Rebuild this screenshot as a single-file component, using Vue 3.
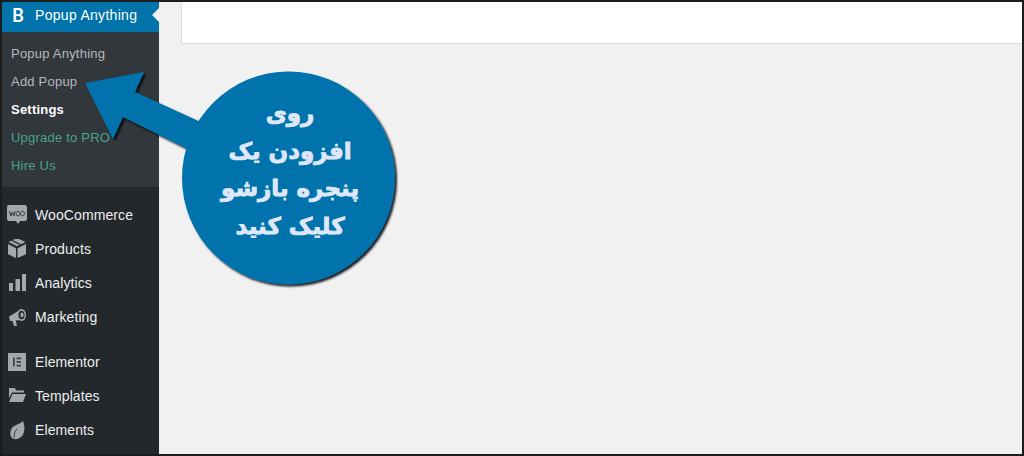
<script setup>
const subItems = [
  { label: 'Popup Anything', kind: 'plain' },
  { label: 'Add Popup', kind: 'plain' },
  { label: 'Settings', kind: 'current' },
  { label: 'Upgrade to PRO', kind: 'green' },
  { label: 'Hire Us', kind: 'green' },
]
const groupOne = [
  { label: 'WooCommerce', icon: 'woo' },
  { label: 'Products', icon: 'box' },
  { label: 'Analytics', icon: 'bars' },
  { label: 'Marketing', icon: 'horn' },
]
const groupTwo = [
  { label: 'Elementor', icon: 'elementor' },
  { label: 'Templates', icon: 'folder' },
  { label: 'Elements', icon: 'leaf' },
]
const groups = [groupOne, groupTwo]
const lines = ['روی', 'افزودن یک', 'پنجره بازشو', 'کلیک کنید']
</script>

<template>
  <div class="frame">
    <aside class="sidebar">
      <div class="active-head">
        <span class="logo">B</span>
        <span class="active-title">Popup Anything</span>
        <span class="notch"></span>
      </div>
      <ul class="submenu">
        <li v-for="item in subItems" :key="item.label" :class="item.kind">{{ item.label }}</li>
      </ul>
      <ul v-for="(group, g) in groups" :key="g" class="menu">
        <li v-for="item in group" :key="item.label" class="menu-item">
          <span class="icon">
            <svg v-if="item.icon === 'woo'" width="20" height="20" viewBox="0 0 20 20">
              <path fill="#a4a8ab" d="M2 0h16a2 2 0 0 1 2 2v12a2 2 0 0 1-2 2h-5l-2 3-2-3H2a2 2 0 0 1-2-2V2a2 2 0 0 1 2-2z"/>
              <path fill="none" stroke="#33383c" stroke-width="1" d="M2.500 6l1.300 5 1.500-4 1.500 4L8 6M11 6.300a1.900 2.300 0 1 0 .01 0M15.500 6.300a1.900 2.300 0 1 0 .01 0"/>
            </svg>
            <svg v-else-if="item.icon === 'box'" width="20" height="20" viewBox="0 0 20 20">
              <path fill="#a4a8ab" d="M10 -1l8.500 4-8.500 4.300L1.500 3zM1 5l8 4.200V19l-8-3.800zM19 5v10.200L10.500 19V9.200z"/>
              <path fill="#23282d" d="M5.500 1l8.500 4.200-1.400.7L4.100 1.700z"/>
            </svg>
            <svg v-else-if="item.icon === 'bars'" width="20" height="20" viewBox="0 0 20 20">
              <path fill="#a4a8ab" d="M2 10h4v8H2zM8.500 6H13v12H8.500zM15 1h4v17h-4z"/>
            </svg>
            <svg v-else-if="item.icon === 'horn'" width="20" height="20" viewBox="0 0 20 20">
              <path fill="#a4a8ab" d="M2 9.500L13 3v10l-4.300.4 1.300 5.600H7L5.300 13.800 3 14z"/>
              <ellipse cx="14.500" cy="8" rx="4.500" ry="6" fill="#a4a8ab"/>
              <ellipse cx="14.500" cy="8" rx="3" ry="4.300" fill="#23282d"/>
              <ellipse cx="15" cy="8" rx="1.600" ry="2.400" fill="#a4a8ab"/>
            </svg>
            <svg v-else-if="item.icon === 'elementor'" width="20" height="20" viewBox="0 0 20 20">
              <path fill="#a4a8ab" d="M1 1h18v18H1z"/>
              <path fill="#3b4045" d="M6 5.500h1.700v9H6zM9.500 5.500h4.500v1.700H9.500zM9.500 9.100h4.500v1.700H9.500zM9.500 12.800h4.500v1.700H9.500z"/>
            </svg>
            <svg v-else-if="item.icon === 'folder'" width="20" height="20" viewBox="0 0 20 20">
              <path fill="#a4a8ab" d="M2 2h5.500l2 2.500H17V6.500H5L2 12z"/>
              <path fill="#a4a8ab" d="M5.500 8H19l-3 8H2z"/>
            </svg>
            <svg v-else width="20" height="20" viewBox="0 0 20 20">
              <path fill="#a4a8ab" d="M16 1c2 5 2 11-.5 14.500C13 19 8 20 5.500 18.500 2.500 16 3 11 5 8c2-3 7-3.500 11-7z"/>
              <path fill="none" stroke="#23282d" stroke-width=".8" d="M7 18c0-4 1-7 3-9"/>
            </svg>
          </span>
          <span class="label">{{ item.label }}</span>
        </li>
      </ul>
    </aside>
    <main class="content">
      <div class="panel"></div>
    </main>

    <svg class="arrow" width="1024" height="456" viewBox="0 0 1024 456">
      <defs>
        <filter id="hard-shadow" x="-20%" y="-20%" width="140%" height="140%">
          <feDropShadow dx="2" dy="2" stdDeviation="1" flood-color="#000" flood-opacity="0.9"/>
        </filter>
      </defs>
      <g filter="url(#hard-shadow)" fill="#0172ac">
        <path d="M85 83L144 72L135 92L205 124L190 150L123 117L113 139Z"/>
        <circle cx="288.500" cy="178" r="106.500"/>
      </g>
    </svg>
    <div class="bubble-text" dir="rtl">
      <div v-for="line in lines" :key="line">{{ line }}</div>
    </div>
  </div>
</template>

<style>
html, body { margin: 0; padding: 0; }
</style>

<style scoped>
.frame {
  position: relative;
  width: 1024px;
  height: 456px;
  box-sizing: border-box;
  border: 2px solid #1d1d1d;
  background: #f1f1f1;
  display: flex;
  overflow: hidden;
  font-family: "Liberation Sans", Arial, sans-serif;
}
.sidebar {
  width: 157px;
  flex: none;
  background: #23282d;
  color: #eee;
}
ul { list-style: none; margin: 0; padding: 0; }
.active-head {
  position: relative;
  height: 30px;
  padding-bottom: 4px;
  box-sizing: border-box;
  background: #0073aa;
  color: #fff;
  display: flex;
  align-items: center;
  font-size: 14px;
  letter-spacing: .3px;
}
.logo {
  width: 33px;
  padding-left: 10px;
  box-sizing: border-box;
  font-family: Lato, sans-serif;
  font-weight: 700;
  font-size: 18px;
}
.notch {
  position: absolute;
  right: 0;
  top: 6px;
  border: 7px solid transparent;
  border-right-color: #f1f1f1;
  border-left-width: 0;
}
.submenu {
  background: #32373c;
  padding: 8px 0 7px;
  font-size: 13px;
  letter-spacing: .22px;
  height: 155px;
  box-sizing: border-box;
}
.submenu li {
  height: 28px;
  line-height: 28px;
  padding-left: 9px;
}
.plain { color: #b4b9be; }
.current { color: #fff; font-weight: 700; }
.green { color: #48a38a; }
.menu { padding-top: 11px; }
.menu-item {
  height: 34px;
  display: flex;
  align-items: center;
  font-size: 14px;
  letter-spacing: .1px;
  color: #eee;
}
.icon {
  width: 33px;
  padding-left: 5px;
  box-sizing: border-box;
  display: flex;
  align-items: center;
}
.content { flex: 1; padding-left: 22px; }
.panel {
  height: 42px;
  box-sizing: border-box;
  background: #fff;
  border: 1px solid #dcdcdc;
  border-top: 0;
  border-right: 0;
}
.arrow {
  position: absolute;
  left: -2px;
  top: -2px;
  pointer-events: none;
}
.bubble-text {
  position: absolute;
  left: 180px;
  top: 93px;
  width: 216px;
  text-align: center;
  color: #dfe7fb;
  font-family: "DejaVu Sans", sans-serif;
  font-weight: 700;
  font-size: 23px;
  line-height: 37.500px;
  -webkit-text-stroke: .9px #dfe7fb;
}
</style>
